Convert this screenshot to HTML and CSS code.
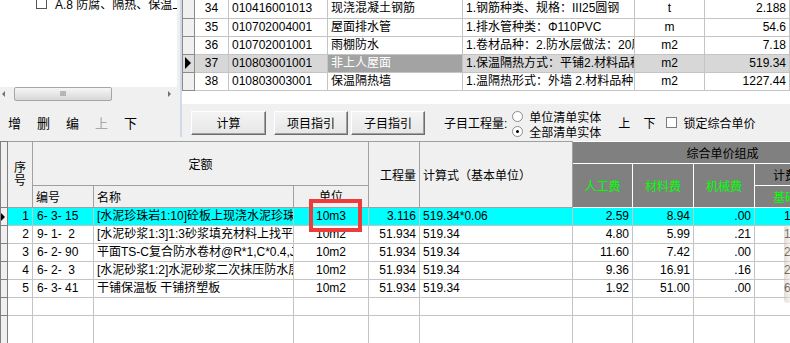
FILE: index.html
```html
<!DOCTYPE html>
<html lang="zh-CN">
<head>
  <meta charset="UTF-8">
  <meta name="viewport" content="width=device-width, initial-scale=1.0">
  <title>分部分项工程量清单</title>
  <link rel="stylesheet" href="styles.css">
</head>
<body>
  <div class="upper">
    <div class="left-pane">
      <div class="tree">
        <div class="tree-item"><span class="tree-check"></span>A.8 防腐、隔热、保温工程</div>
      </div>
      <div class="hscroll">
        <span class="arrow-left"></span>
        <span class="thumb">III</span>
        <span class="arrow-right"></span>
      </div>
      <div class="edit-bar">
        <span>增</span>
        <span>删</span>
        <span>编</span>
        <span class="disabled">上</span>
        <span>下</span>
      </div>
    </div>

    <div class="splitter"></div>

    <div class="right-pane">
      <div class="bill-grid">
        <table>
          <colgroup>
            <col style="width:12px">
            <col style="width:34px">
            <col style="width:99px">
            <col style="width:135px">
            <col style="width:172px">
            <col style="width:70px">
            <col style="width:85px">
          </colgroup>
          <tr>
            <td class="ind"></td><td class="c">34</td><td>010416001013</td><td>现浇混凝土钢筋</td>
            <td>1.钢筋种类、规格：III25圆钢</td><td class="c">t</td><td class="r">2.188</td>
          </tr>
          <tr>
            <td class="ind"></td><td class="c">35</td><td>010702004001</td><td>屋面排水管</td>
            <td>1.排水管种类：Φ110PVC</td><td class="c">m</td><td class="r">54.6</td>
          </tr>
          <tr>
            <td class="ind"></td><td class="c">36</td><td>010702001001</td><td>雨棚防水</td>
            <td>1.卷材品种：2.防水层做法：20厚1:3水泥砂浆找平</td><td class="c">m2</td><td class="r">7.18</td>
          </tr>
          <tr class="current">
            <td class="ind"><span class="pointer"></span></td><td class="c">37</td><td>010803001001</td><td class="focus">非上人屋面</td>
            <td>1.保温隔热方式：平铺2.材料品种：挤塑板</td><td class="c">m2</td><td class="r">519.34</td>
          </tr>
          <tr>
            <td class="ind"></td><td class="c">38</td><td>010803003001</td><td>保温隔热墙</td>
            <td>1.温隔热形式：外墙 2.材料品种</td><td class="c">m2</td><td class="r">1227.44</td>
          </tr>
        </table>
      </div>

      <div class="tool-bar">
        <button class="btn btn-calc">计算</button>
        <button class="btn btn-item">项目指引</button>
        <button class="btn">子目指引</button>
        <span class="qty-label">子目工程量:</span>
        <div class="radio-group">
          <label><span class="radio"></span>单位清单实体</label>
          <label><span class="radio checked"></span>全部清单实体</label>
        </div>
        <span class="move">上</span>
        <span class="move">下</span>
        <label class="lock"><span class="box"></span>锁定综合单价</label>
      </div>
    </div>
  </div>

  <div class="quota-grid">
    <table>
      <colgroup>
        <col style="width:7px">
        <col style="width:25px">
        <col style="width:61px">
        <col style="width:200px">
        <col style="width:75px">
        <col style="width:51px">
        <col style="width:153px">
        <col style="width:60px">
        <col style="width:61px">
        <col style="width:61px">
        <col style="width:118px">
      </colgroup>
      <thead>
        <tr class="h1">
          <th class="ind" rowspan="3"></th>
          <th rowspan="3" class="seq">序<br>号</th>
          <th colspan="3" rowspan="2">定额</th>
          <th rowspan="3" class="r">工程量</th>
          <th rowspan="3" class="l">计算式（基本单位）</th>
          <th colspan="4" class="dark">综合单价组成</th>
        </tr>
        <tr class="h2">
          <th rowspan="2" class="dark green">人工费</th>
          <th rowspan="2" class="dark green">材料费</th>
          <th rowspan="2" class="dark green">机械费</th>
          <th class="dark l fee-head">计费</th>
        </tr>
        <tr class="h3">
          <th class="l">编号</th>
          <th class="l">名称</th>
          <th class="unit-head">单位</th>
          <th class="dark green l fee-head">基础</th>
        </tr>
      </thead>
      <tbody>
        <tr class="selected">
          <td class="ind"><span class="pointer"></span></td>
          <td class="r">1</td><td class="code">6- 3- 15</td><td>[水泥珍珠岩1:10]砼板上现浇水泥珍珠岩</td>
          <td class="c">10m3</td><td class="r">3.116</td><td>519.34*0.06</td>
          <td class="r">2.59</td><td class="r">8.94</td><td class="r">.00</td><td class="fee">12.35</td>
        </tr>
        <tr>
          <td class="ind"></td>
          <td class="r">2</td><td class="code">9- 1-  2</td><td>[水泥砂浆1:3]1:3砂浆填充材料上找平层</td>
          <td class="c">10m2</td><td class="r">51.934</td><td>519.34</td>
          <td class="r">4.80</td><td class="r">5.99</td><td class="r">.21</td><td class="fee">11.00</td>
        </tr>
        <tr>
          <td class="ind"></td>
          <td class="r">3</td><td class="code">6- 2- 90</td><td>平面TS-C复合防水卷材@R*1,C*0.4,J*1</td>
          <td class="c">10m2</td><td class="r">51.934</td><td>519.34</td>
          <td class="r">11.60</td><td class="r">7.42</td><td class="r">.00</td><td class="fee">20.00</td>
        </tr>
        <tr>
          <td class="ind"></td>
          <td class="r">4</td><td class="code">6- 2-  3</td><td>[水泥砂浆1:2]水泥砂浆二次抹压防水层</td>
          <td class="c">10m2</td><td class="r">51.934</td><td>519.34</td>
          <td class="r">9.36</td><td class="r">16.91</td><td class="r">.16</td><td class="fee">27.00</td>
        </tr>
        <tr>
          <td class="ind"></td>
          <td class="r">5</td><td class="code">6- 3- 41</td><td>干铺保温板 干铺挤塑板</td>
          <td class="c">10m2</td><td class="r">51.934</td><td>519.34</td>
          <td class="r">1.92</td><td class="r">51.00</td><td class="r">.00</td><td class="fee">60.00</td>
        </tr>
        <tr class="blank">
          <td class="ind"></td><td></td><td></td><td></td><td></td><td></td><td></td><td></td><td></td><td></td><td></td>
        </tr>
        <tr class="blank tall">
          <td class="ind"></td><td></td><td></td><td></td><td></td><td></td><td></td><td></td><td></td><td></td><td></td>
        </tr>
      </tbody>
    </table>
    <div class="mark"></div>
    <div class="edge"></div>
  </div>
</body>
</html>
```

FILE: styles.css
```css
* {
  box-sizing: border-box;
}

body {
  margin: 0;
  width: 790px;
  height: 343px;
  overflow: hidden;
  font-family: 'Liberation Sans', 'Noto Sans CJK SC', sans-serif;
  font-size: 12px;
  color: #000;
  background-color: #f0f0f0;
}

table {
  border-collapse: collapse;
  table-layout: fixed;
}

td, th {
  padding: 0 3px;
  white-space: nowrap;
  overflow: hidden;
  font-weight: normal;
}

.c { text-align: center; }
.r { text-align: right; }
.l { text-align: left; }

/* ---------- upper part ---------- */

.upper {
  display: flex;
  height: 141px;
}

.left-pane {
  width: 177px;
  display: flex;
  flex-direction: column;
}

.tree {
  height: 87px;
  background-color: #fff;
  overflow: hidden;
}

.tree-item {
  display: flex;
  align-items: center;
  margin-top: -6px;
  padding-left: 36px;
  height: 18px;
  white-space: nowrap;
}

.tree-check {
  width: 11px;
  height: 11px;
  border: 1px solid #555;
  background-color: #fff;
  margin-right: 8px;
  flex-shrink: 0;
}

.hscroll {
  height: 14px;
  display: flex;
  align-items: center;
  background-color: #f0f0f0;
}

.arrow-left,
.arrow-right {
  width: 0;
  height: 0;
  border-top: 3px solid transparent;
  border-bottom: 3px solid transparent;
}

.arrow-left {
  margin-left: 2px;
  border-right: 3px solid #707070;
}

.arrow-right {
  margin-left: auto;
  margin-right: 6px;
  border-left: 3px solid #707070;
}

.thumb {
  margin-left: 9px;
  width: 98px;
  height: 14px;
  border: 1px solid #a6a6a6;
  border-radius: 2px;
  background: linear-gradient(#f6f6f6, #d8d8d8);
  font-size: 7px;
  line-height: 12px;
  color: #555;
  text-align: center;
}

.edit-bar {
  flex: 1;
  display: flex;
  align-items: center;
  gap: 16px;
  padding: 3px 0 0 8px;
  font-size: 13px;
}

.edit-bar .disabled {
  color: #a8a8a8;
}

.splitter {
  width: 6px;
  height: 137px;
  background: linear-gradient(to right, #f0f0f0 3px, #cfdbe8 3px, #cfdbe8 5px, #f0f0f0 5px);
}

.right-pane {
  flex: 1;
  display: flex;
  flex-direction: column;
}

.bill-grid {
  height: 104px;
  background-color: #fff;
  overflow: hidden;
}

.bill-grid table {
  width: 607px;
}

.bill-grid td {
  height: 18px;
  line-height: 17px;
  border: 1px solid #c4c4c4;
  border-top: none;
}

.bill-grid td.ind {
  padding: 0;
  background-color: #f0f0f0;
  border-color: #8c8c8c;
}

.bill-grid tr.current td {
  background-color: #d7d7d7;
}

.bill-grid tr.current td.focus {
  background-color: #a3a3a3;
  color: #fff;
}

.bill-grid tr.current td.ind {
  background-color: #dcdcdc;
}

.bill-grid .pointer {
  display: block;
  margin-left: 2px;
  width: 0;
  height: 0;
  border-left: 6px solid #000;
  border-top: 6px solid transparent;
  border-bottom: 6px solid transparent;
}

.tool-bar {
  flex: 1;
  display: flex;
  align-items: center;
  padding-left: 9px;
  background-color: #f0f0f0;
}

.btn {
  width: 74px;
  height: 24px;
  padding: 0;
  font-family: inherit;
  font-size: 12px;
  background: linear-gradient(#f4f4f4, #e6e6e6);
  border: 1px solid;
  border-color: #fff #6d6d6d #6d6d6d #fff;
  box-shadow: inset -1px -1px #a0a0a0;
  margin-right: 3px;
}

.btn-calc {
  width: 75px;
  margin-right: 8px;
}

.qty-label {
  margin-left: 16px;
  margin-right: 5px;
}

.radio-group {
  display: flex;
  flex-direction: column;
  margin-top: 3px;
}

.radio-group label {
  display: flex;
  align-items: center;
  height: 15px;
}

.radio {
  width: 11px;
  height: 11px;
  border: 1px solid #8a8a8a;
  border-radius: 50%;
  background-color: #fff;
  margin-right: 6px;
  position: relative;
}

.radio.checked::after {
  content: '';
  position: absolute;
  left: 3px;
  top: 3px;
  width: 3px;
  height: 3px;
  border-radius: 50%;
  background-color: #000;
}

.move {
  margin-left: 17px;
}

.move + .move {
  margin-left: 13px;
}

.lock {
  display: flex;
  align-items: center;
  margin-left: 11px;
}

.box {
  width: 11px;
  height: 11px;
  border: 1px solid #7a7a7a;
  background-color: #fff;
  margin-right: 6px;
}

/* ---------- quota grid ---------- */

.quota-grid {
  position: relative;
  height: 202px;
  background-color: #fff;
  overflow: hidden;
}

.quota-grid table {
  width: 872px;
}

.quota-grid th {
  background-color: #f0f0f0;
  border: 1px solid #a0a0a0;
  text-align: center;
}

.quota-grid th.l { text-align: left; }
.quota-grid th.r { text-align: right; }

.quota-grid tr.h1 th,
.quota-grid tr.h2 th,
.quota-grid tr.h3 th {
  height: 22px;
}

.quota-grid th.seq {
  line-height: 13px;
  padding: 0;
}

.quota-grid th.unit-head {
  vertical-align: top;
  padding-top: 1px;
}

.quota-grid th.dark {
  background-color: #808080;
  border-color: #fff;
}

.quota-grid th.green {
  color: #00ff00;
}

.quota-grid th.fee-head {
  padding-left: 18px;
}

.quota-grid th.ind,
.quota-grid td.ind {
  padding: 0;
  background-color: #f0f0f0;
  border-color: #808080;
}

.quota-grid td {
  height: 18px;
  line-height: 17px;
  border: 1px solid #c4c4c4;
}

.quota-grid td.code {
  white-space: pre;
  padding-left: 4px;
}

.quota-grid td.fee {
  padding-left: 29px;
}

.quota-grid tr.selected td {
  background-color: #00ffff;
}

.quota-grid tr.selected td.ind {
  background-color: #f0f0f0;
}

.quota-grid .pointer {
  display: block;
  width: 0;
  height: 0;
  border-left: 4px solid #000;
  border-top: 4px solid transparent;
  border-bottom: 4px solid transparent;
}

.quota-grid tr.tall td {
  height: 40px;
}

.mark {
  position: absolute;
  left: 309px;
  top: 58px;
  width: 53px;
  height: 33px;
  border: 4px solid #ee3b3b;
}

.edge {
  position: absolute;
  right: 0;
  top: 84px;
  width: 6px;
  height: 78px;
  border-radius: 4px 0 0 4px;
  background: linear-gradient(to right, rgba(190, 180, 170, 0.45), rgba(240, 232, 222, 0.55));
}
```
